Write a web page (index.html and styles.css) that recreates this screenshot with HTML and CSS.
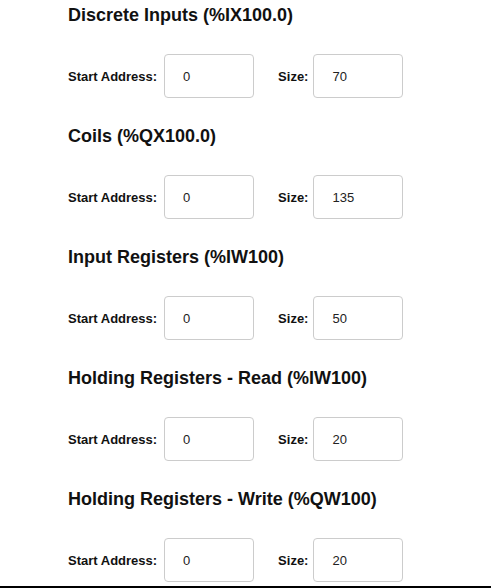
FILE: index.html
```html
<!DOCTYPE html>
<html>
<head>
<meta charset="utf-8">
<link rel="stylesheet" href="styles.css">
</head>
<body>
<div class="panel">
  <section class="group">
    <h2 class="group-title">Discrete Inputs (%IX100.0)</h2>
    <div class="fields">
      <label class="field-label start-label">Start Address:</label>
      <input class="field-input" type="text" value="0">
      <label class="field-label size-label">Size:</label>
      <input class="field-input" type="text" value="70">
    </div>
  </section>
  <section class="group">
    <h2 class="group-title">Coils (%QX100.0)</h2>
    <div class="fields">
      <label class="field-label start-label">Start Address:</label>
      <input class="field-input" type="text" value="0">
      <label class="field-label size-label">Size:</label>
      <input class="field-input" type="text" value="135">
    </div>
  </section>
  <section class="group">
    <h2 class="group-title">Input Registers (%IW100)</h2>
    <div class="fields">
      <label class="field-label start-label">Start Address:</label>
      <input class="field-input" type="text" value="0">
      <label class="field-label size-label">Size:</label>
      <input class="field-input" type="text" value="50">
    </div>
  </section>
  <section class="group">
    <h2 class="group-title">Holding Registers - Read (%IW100)</h2>
    <div class="fields">
      <label class="field-label start-label">Start Address:</label>
      <input class="field-input" type="text" value="0">
      <label class="field-label size-label">Size:</label>
      <input class="field-input" type="text" value="20">
    </div>
  </section>
  <section class="group">
    <h2 class="group-title">Holding Registers - Write (%QW100)</h2>
    <div class="fields">
      <label class="field-label start-label">Start Address:</label>
      <input class="field-input" type="text" value="0">
      <label class="field-label size-label">Size:</label>
      <input class="field-input" type="text" value="20">
    </div>
  </section>
</div>
</body>
</html>
```

FILE: styles.css
```css
html, body {
  margin: 0;
  padding: 0;
  background: #fff;
}
body {
  font-family: "Liberation Sans", Arial, sans-serif;
  color: #000;
}
.panel {
  padding: 4px 0 2px 68px;
  border-bottom: 2px solid #000;
  height: 580px;
  box-sizing: content-box;
  overflow: hidden;
}
.group {
  display: flex;
  flex-direction: column;
  gap: 28px;
  margin-bottom: 27px;
}
.group-title {
  margin: 0;
  font-size: 18px;
  line-height: 22px;
  font-weight: bold;
  color: #111;
}
.fields {
  display: flex;
  align-items: center;
}
.field-label {
  font-size: 13px;
  font-weight: bold;
  color: #111;
  margin-right: 5px;
}
.start-label {
  margin-right: 7px;
}
.size-label {
  margin-left: 24px;
}
.field-input {
  box-sizing: border-box;
  width: 90px;
  height: 44px;
  border: 1px solid #ccc;
  border-radius: 4px;
  padding: 0 0 0 18px;
  font-family: "Liberation Sans", Arial, sans-serif;
  font-size: 13px;
  color: #222;
  background: #fff;
  outline: none;
}
```
